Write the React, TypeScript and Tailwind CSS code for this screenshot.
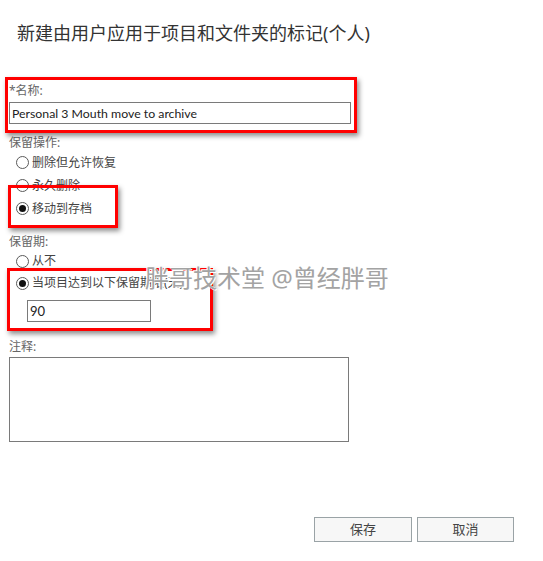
const FONT = "font-['Segoe_UI','Noto_Sans','Noto_Sans_CJK_SC',sans-serif]"

function Radio({ checked, label, h }: { checked?: boolean; label: string; h: string }) {
  return (
    <div className={`flex items-center pl-[16px] ${h}`}>
      <span className="flex h-[13px] w-[13px] items-center justify-center rounded-full border border-[#5a5a5a] bg-white">
        {checked && <span className="h-[7px] w-[7px] rounded-full bg-[#111]" />}
      </span>
      <span className="ml-[3px] text-[12px] leading-[16px] text-[#444]">{label}</span>
    </div>
  )
}

function Mark({ className }: { className: string }) {
  return (
    <div
      className={`pointer-events-none absolute border-[3px] border-[#ff0000] shadow-[2px_3px_5px_rgba(0,0,0,0.45)] ${className}`}
    />
  )
}

export default function App() {
  return (
    <div className={`relative h-[561px] w-[543px] overflow-hidden bg-white ${FONT}`}>
      <h1 className="pl-[17px] pt-[21px] text-[18px] font-normal leading-[24px] text-[#333]">
        新建由用户应用于项目和文件夹的标记(个人)
      </h1>

      <div className="mt-[38px] pl-[9px]">
        <div className="text-[12px] leading-[16px] text-[#666]">*名称:</div>
        <input
          readOnly
          value="Personal 3 Mouth move to archive"
          className="mt-[3px] block h-[22px] w-[342px] border border-[#7a7a7a] px-[2px] font-['Lato',sans-serif] text-[12.3px] text-[#222] outline-none"
        />
      </div>

      <div className="mt-[11px] pl-[9px] text-[12px] leading-[16px] text-[#666]">保留操作:</div>
      <Radio label="删除但允许恢复" h="h-[23px]" />
      <Radio label="永久删除" h="h-[23px]" />
      <Radio checked label="移动到存档" h="h-[23px]" />

      <div className="mt-[14px] pl-[9px] text-[12px] leading-[16px] text-[#666]">保留期:</div>
      <Radio label="从不" h="h-[22px]" />
      <Radio checked label="当项目达到以下保留期限(天)" h="h-[22px]" />
      <div className="pl-[27px] pt-[6px]">
        <input
          readOnly
          value="90"
          className="block h-[22px] w-[124px] border border-[#7a7a7a] px-[2px] font-['Lato',sans-serif] text-[13px] text-[#222] outline-none"
        />
      </div>

      <div className="mt-[17px] pl-[9px] text-[12px] leading-[16px] text-[#666]">注释:</div>
      <div className="pl-[9px] pt-[2px]">
        <textarea readOnly className="block h-[85px] w-[340px] resize-none border border-[#7a7a7a] outline-none" />
      </div>

      <div className="mt-[75px] flex gap-[5px] pl-[314px]">
        <button className="h-[25px] w-[98px] border border-[#9aa3a6] bg-[#f7f7f7] text-[13px] text-[#444]">保存</button>
        <button className="h-[25px] w-[97px] border border-[#9aa3a6] bg-[#f7f7f7] text-[13px] text-[#444]">取消</button>
      </div>

      <Mark className="left-[5px] top-[77px] h-[56px] w-[352px]" />
      <Mark className="left-[8px] top-[185px] h-[43px] w-[110px]" />
      <Mark className="left-[7px] top-[268px] h-[63px] w-[206px]" />

      <div className="pointer-events-none absolute left-[145px] top-[262px] text-[24px] leading-[32px] text-[#a3a3a3] [text-shadow:1px_1px_0_#fff,-1px_-1px_0_#fff]">
        胖哥技术堂 @曾经胖哥
      </div>
    </div>
  )
}
